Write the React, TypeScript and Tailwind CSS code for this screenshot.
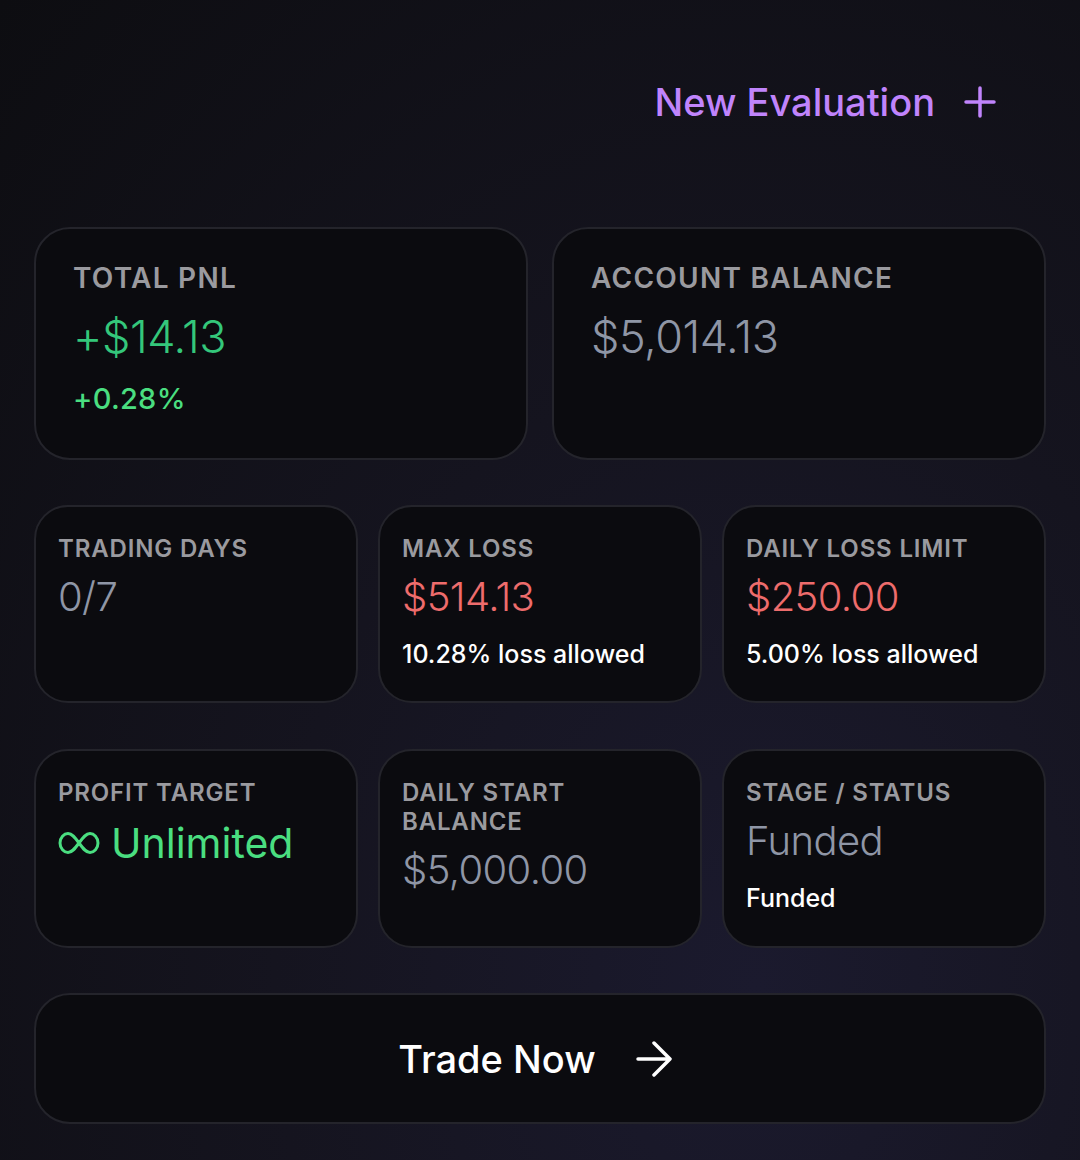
import React from 'react';

type Tone = 'green' | 'red' | 'gray';

const toneClass: Record<Tone, string> = {
  green: 'text-[#34c77b]',
  red: 'text-[#ee6c6c]',
  gray: 'text-[#8f96a6]',
};

interface StatProps {
  label: string;
  value: React.ReactNode;
  tone: Tone;
  sub?: string;
}

function BigStat({ label, value, tone, sub }: StatProps) {
  return (
    <div className="h-[233px] rounded-[36px] border-2 border-[#24242b] bg-[#0b0b0f] pl-[37px] pt-[32px]">
      <div className="text-[28px] leading-[34px] font-semibold tracking-[0.045em] text-[#9a9a9f]">{label}</div>
      <div className={`mt-[15px] text-[45px] leading-[54px] font-light tracking-[-0.01em] ${toneClass[tone]}`}>{value}</div>
      {sub && (
        <div className="mt-[19px] text-[29px] leading-[32px] font-medium tracking-[0.01em] text-[#4ade80]">{sub}</div>
      )}
    </div>
  );
}

function SmallStat({ label, value, tone, sub, h }: StatProps & { h: string }) {
  return (
    <div className={`${h} rounded-[34px] border-2 border-[#24242b] bg-[#0b0b0f] pl-[22px] pr-4 pt-[27px]`}>
      <div className="text-[24px] leading-[29px] font-semibold tracking-[0.035em] text-[#9a9a9f]">{label}</div>
      <div className={`mt-[9px] text-[40px] leading-[50px] font-light tracking-[-0.015em] ${toneClass[tone]}`}>{value}</div>
      {sub && (
        <div className="mt-[17px] text-[25px] leading-[30px] font-medium text-white">{sub}</div>
      )}
    </div>
  );
}

function Infinity() {
  return (
    <svg width="42" height="24" viewBox="0 0 42 24" fill="none" stroke="currentColor" strokeWidth="3" className="mr-[11px] inline-block">
      <path d="M21 12c-4-5.5-7-9.5-11-9.5S2 6.5 2 12s4 9.5 8 9.5 7-4 11-9.5 7-9.5 11-9.5 8 4 8 9.5-4 9.5-8 9.5-7-4-11-9.5z" />
    </svg>
  );
}

export default function App() {
  return (
    <div
      className="min-h-[1160px] w-[1080px] bg-[radial-gradient(ellipse_at_70%_85%,#1b1a2e_0%,#15141f_45%,#0d0d11_100%)] px-[34px] pb-[36px]"
      style={{ fontFamily: 'Inter, "Noto Sans", sans-serif' }}
    >
      {/* Header action */}
      <div className="flex justify-end pr-[50px] pt-[79px]">
        <button className="flex items-center gap-[29px] text-[#c084fc]">
          <span className="text-[38px] leading-[46px] font-medium">New Evaluation</span>
          <svg width="32" height="32" viewBox="0 0 32 32" fill="none" stroke="currentColor" strokeWidth="3.5" strokeLinecap="round">
            <path d="M16 2v28M2 16h28" />
          </svg>
        </button>
      </div>

      {/* Headline stats */}
      <div className="mt-[102px] grid grid-cols-2 gap-[24px]">
        <BigStat label="TOTAL PNL" value="+$14.13" tone="green" sub="+0.28%" />
        <BigStat label="ACCOUNT BALANCE" value="$5,014.13" tone="gray" />
      </div>

      {/* Limits */}
      <div className="mt-[45px] grid grid-cols-3 gap-[20px]">
        <SmallStat h="h-[198px]" label="TRADING DAYS" value="0/7" tone="gray" />
        <SmallStat h="h-[198px]" label="MAX LOSS" value="$514.13" tone="red" sub="10.28% loss allowed" />
        <SmallStat h="h-[198px]" label="DAILY LOSS LIMIT" value="$250.00" tone="red" sub="5.00% loss allowed" />
      </div>

      <div className="mt-[46px] grid grid-cols-3 gap-[20px]">
        <SmallStat
          h="h-[199px]"
          label="PROFIT TARGET"
          value={
            <span className="inline-flex items-center text-[41px] text-[#4ade80] font-normal tracking-[0]">
              <Infinity />
              Unlimited
            </span>
          }
          tone="green"
        />
        <SmallStat h="h-[199px]" label="DAILY START BALANCE" value="$5,000.00" tone="gray" />
        <SmallStat h="h-[199px]" label="STAGE / STATUS" value="Funded" tone="gray" sub="Funded" />
      </div>

      {/* CTA */}
      <button className="mt-[45px] flex h-[131px] w-full items-center justify-center gap-[40px] rounded-[36px] border-2 border-[#24242b] bg-[#0b0b0f] pr-[10px] text-white">
        <span className="text-[38px] leading-[46px] font-medium">Trade Now</span>
        <svg width="36" height="38" viewBox="0 0 36 38" fill="none" stroke="currentColor" strokeWidth="3.5" strokeLinecap="round" strokeLinejoin="round">
          <path d="M2 19h31M18 3l16 16-16 16" />
        </svg>
      </button>
    </div>
  );
}
